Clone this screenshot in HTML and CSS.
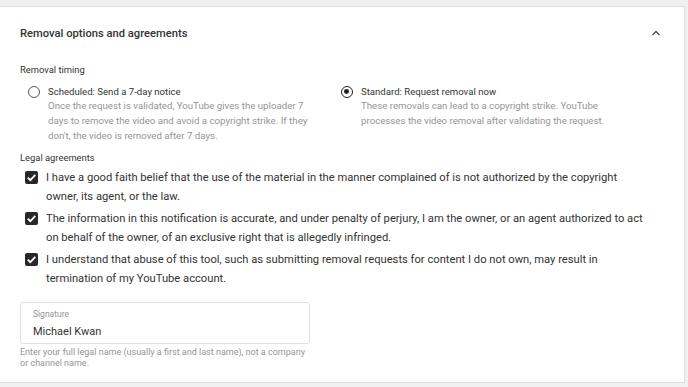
FILE: index.html
```html
<!DOCTYPE html>
<html>
<head>
<meta charset="utf-8">
<link rel="stylesheet" href="styles.css">
</head>
<body>
<div class="card">
  <div class="header">
    <div class="title">Removal options and agreements</div>
    <svg class="chev" width="12" height="8" viewBox="0 0 12 8"><path d="M2.5 6 L6 2.5 L9.5 6" fill="none" stroke="#555" stroke-width="1.5"/></svg>
  </div>
  <div class="section-label">Removal timing</div>
  <div class="timing">
    <div class="opt">
      <span class="radio"></span>
      <div class="opt-text">
        <div class="opt-title">Scheduled: Send a 7-day notice</div>
        <div class="opt-desc">Once the request is validated, YouTube gives the uploader 7 days to remove the video and avoid a copyright strike. If they don't, the video is removed after 7 days.</div>
      </div>
    </div>
    <div class="opt">
      <span class="radio on"></span>
      <div class="opt-text">
        <div class="opt-title">Standard: Request removal now</div>
        <div class="opt-desc">These removals can lead to a copyright strike. YouTube processes the video removal after validating the request.</div>
      </div>
    </div>
  </div>
  <div class="section-label legal">Legal agreements</div>
  <div class="checks">
    <div class="check">
      <span class="box"><svg width="13" height="13" viewBox="0 0 13 13"><path d="M2.8 6.6 L5.3 9.1 L10.3 3.9" fill="none" stroke="#fff" stroke-width="1.8"/></svg></span>
      <div class="check-text">I have a good faith belief that the use of the material in the manner complained of is not authorized by the copyright owner, its agent, or the law.</div>
    </div>
    <div class="check">
      <span class="box"><svg width="13" height="13" viewBox="0 0 13 13"><path d="M2.8 6.6 L5.3 9.1 L10.3 3.9" fill="none" stroke="#fff" stroke-width="1.8"/></svg></span>
      <div class="check-text">The information in this notification is accurate, and under penalty of perjury, I am the owner, or an agent authorized to act on behalf of the owner, of an exclusive right that is allegedly infringed.</div>
    </div>
    <div class="check">
      <span class="box"><svg width="13" height="13" viewBox="0 0 13 13"><path d="M2.8 6.6 L5.3 9.1 L10.3 3.9" fill="none" stroke="#fff" stroke-width="1.8"/></svg></span>
      <div class="check-text">I understand that abuse of this tool, such as submitting removal requests for content I do not own, may result in termination of my YouTube account.</div>
    </div>
  </div>
  <div class="field">
    <div class="field-label">Signature</div>
    <div class="field-value">Michael Kwan</div>
  </div>
  <div class="helper">Enter your full legal name (usually a first and last name), not a company or channel name.</div>
</div>
</body>
</html>
```
FILE: styles.css
```css
html, body {
  margin: 0;
  padding: 0;
  background: #f0f0f0;
  font-family: Roboto, "Liberation Sans", sans-serif;
  color: #333;
}
body {
  padding: 6px 3px 3px 0;
}
.card {
  background: #fff;
  border: 1px solid #e0e0e0;
  border-left: none;
  height: 377px;
  box-sizing: border-box;
  padding: 0 0 0 20px;
}
.header {
  display: flex;
  align-items: center;
  justify-content: space-between;
  height: 52px;
  padding-right: 22px;
}
.title {
  font-size: 11.2px;
  font-weight: 500;
  color: #333;
  padding-top: 1px;
}
.chev { display: block; }
.section-label {
  font-size: 9.4px;
  color: #333;
  margin-top: 4px;
  line-height: 14px;
}
.timing {
  display: grid;
  grid-template-columns: 313px 1fr;
  margin-top: 9px;
}
.opt {
  display: flex;
  align-items: flex-start;
  padding-left: 8px;
}
.radio {
  width: 12px;
  height: 12px;
  border: 1.6px solid #555;
  border-radius: 50%;
  box-sizing: border-box;
  flex: none;
  position: relative;
}
.radio.on {
  border-color: #222;
}
.radio.on::after {
  content: "";
  position: absolute;
  left: 2px; top: 2px;
  width: 4.8px; height: 4.8px;
  border-radius: 50%;
  background: #222;
}
.opt-text { margin-left: 8px; width: 262px; }
.opt-title { font-size: 9.6px; line-height: 12px; color: #333; }
.opt-desc { font-size: 9.7px; line-height: 15px; color: #959595; }
.legal { margin-top: 8px; }
.checks { margin-top: 3px; }
.check {
  display: flex;
  align-items: flex-start;
  padding-left: 5px;
  margin-bottom: 3px;
}
.box {
  width: 13px;
  height: 13px;
  background: #282828;
  border-radius: 2px;
  flex: none;
  margin-top: 3px;
}
.box svg { display: block; }
.check-text {
  margin-left: 8px;
  font-size: 11.2px;
  line-height: 19px;
  width: 600px;
  color: #333;
}
.field {
  margin-top: 14px;
  width: 290px;
  height: 42px;
  border: 1px solid #e0e0e0;
  border-radius: 3px;
  box-sizing: border-box;
  padding: 6px 12px 0;
}
.field-label { font-size: 8.5px; color: #959595; line-height: 11px; }
.field-value { font-size: 11px; line-height: 17px; margin-top: 3px; color: #333; }
.helper {
  margin-top: 3px;
  font-size: 9px;
  line-height: 11px;
  color: #959595;
  width: 292px;
}
```
